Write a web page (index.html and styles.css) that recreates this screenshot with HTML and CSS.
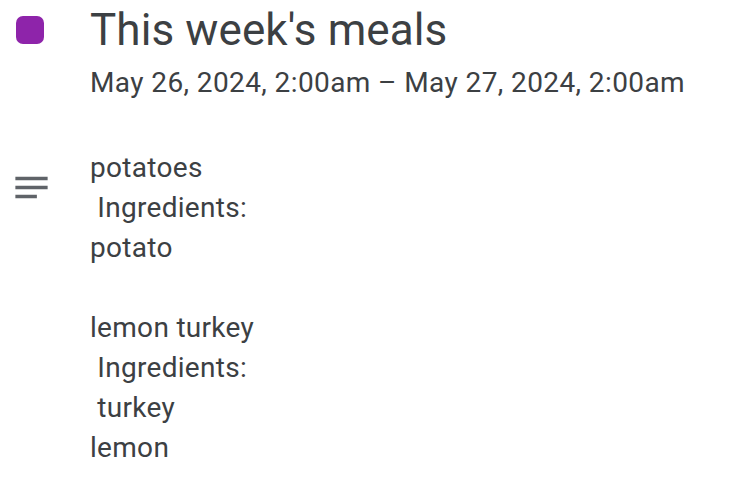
FILE: index.html
```html
<!DOCTYPE html>
<html>
<head>
<meta charset="utf-8">
<link rel="stylesheet" href="styles.css">
</head>
<body>
<div class="event">
  <div class="row head-row">
    <div class="gutter"><span class="swatch"></span></div>
    <div class="main">
      <div class="title">This week's meals</div>
      <div class="date">May 26, 2024, 2:00am – May 27, 2024, 2:00am</div>
    </div>
  </div>
  <div class="row desc-row">
    <div class="gutter">
      <svg class="notes" viewBox="0 0 24 24"><path d="M3 18h12v-2H3v2zM3 6v2h18V6H3zm0 7h18v-2H3v2z"/></svg>
    </div>
    <div class="main desc">potatoes
 Ingredients:
potato

lemon turkey
 Ingredients:
 turkey
lemon</div>
  </div>
</div>
</body>
</html>
```

FILE: styles.css
```css
html, body {
  margin: 0;
  padding: 0;
  background: #ffffff;
}
body {
  font-family: Roboto, "Noto Sans", sans-serif;
  color: #3c4043;
}
.event {
  display: flex;
  flex-direction: column;
}
.row {
  display: flex;
}
.gutter {
  width: 90px;
  flex: none;
}
.head-row .gutter {
  padding: 16px 0 0 16px;
  box-sizing: border-box;
}
.swatch {
  display: block;
  width: 28px;
  height: 28px;
  border-radius: 7px;
  background: #8e24aa;
}
.main {
  flex: 1;
}
.head-row .main {
  padding-top: 2px;
}
.title {
  font-size: 44px;
  line-height: 56px;
  font-weight: 400;
  letter-spacing: 0.1px;
}
.date {
  font-size: 28px;
  line-height: 40px;
  margin-top: 5px;
  letter-spacing: 0.4px;
}
.desc-row {
  margin-top: 45px;
}
.desc-row .gutter {
  padding: 18px 0 0 10px;
  box-sizing: border-box;
}
.notes {
  display: block;
  width: 43px;
  height: 43px;
  fill: #5f6368;
}
.desc {
  white-space: pre-wrap;
  font-size: 28px;
  line-height: 40px;
  letter-spacing: 0.3px;
}
```
